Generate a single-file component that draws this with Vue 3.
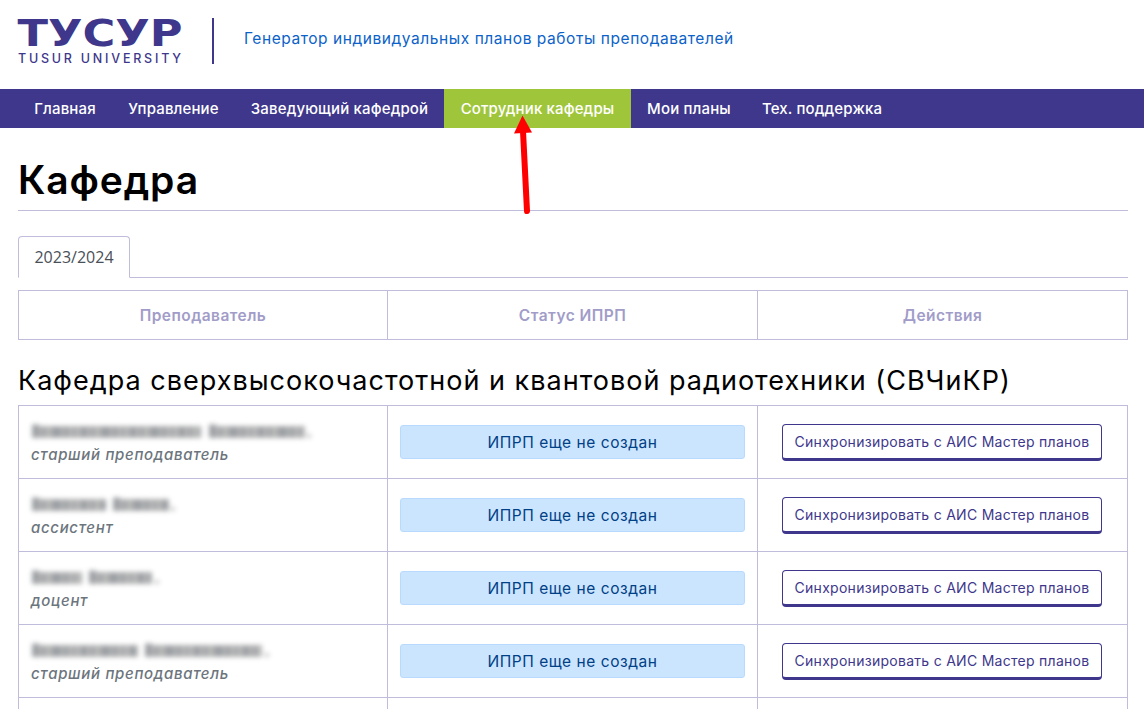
<script setup>
const nav = ['Главная', 'Управление', 'Заведующий кафедрой', 'Сотрудник кафедры', 'Мои планы', 'Тех. поддержка']
const columns = ['Преподаватель', 'Статус ИПРП', 'Действия']
const rows = [
  { words: [[1, 170], [178, 274]], end: 278, role: 'старший преподаватель' },
  { words: [[1, 75], [82, 138]], end: 142, role: 'ассистент' },
  { words: [[1, 51], [58, 121]], end: 126, role: 'доцент' },
  { words: [[1, 107], [114, 231]], end: 236, role: 'старший преподаватель' },
]
</script>

<template>
  <div class="page">
    <header class="header">
      <svg class="logo" width="164" height="46" viewBox="0 0 164 46">
        <text class="logo-main" x="-0.5" y="28" textLength="165" lengthAdjust="spacingAndGlyphs">ТУСУР</text>
        <text class="logo-sub" x="0" y="45" textLength="163" lengthAdjust="spacing">TUSUR UNIVERSITY</text>
      </svg>
      <div class="divider"></div>
      <a class="title">Генератор индивидуальных планов работы преподавателей</a>
    </header>
    <nav class="nav">
      <a v-for="(n, i) in nav" :key="n" class="item" :class="{ active: i === 3 }">{{ n }}</a>
    </nav>
    <svg class="arrow" width="24" height="102" viewBox="0 0 24 102">
      <path d="M11 16L15 96" stroke="#f00" stroke-width="6" stroke-linecap="round" />
      <path d="M10.500 0.500L20 17.500L2 18.500Z" fill="#f00" />
    </svg>
    <main class="main">
      <h1>Кафедра</h1>
      <div class="tabs"><a class="tab">2023/2024</a></div>
      <div class="grid head">
        <div v-for="c in columns" :key="c" class="cell">{{ c }}</div>
      </div>
      <h2>Кафедра сверхвысокочастотной и квантовой радиотехники (СВЧиКР)</h2>
      <div class="list">
        <div v-for="(r, i) in rows" :key="i" class="grid row">
          <div class="cell person">
            <svg class="hidden-name" width="300" height="22" viewBox="0 0 300 22">
              <g v-for="w in r.words" :key="w[0]">
                <path :d="`M${w[0]} 12H${w[1]}`" stroke="#969696" stroke-width="12" />
                <path :d="`M${w[0]} 12H${w[1]}`" stroke="#6c7278" stroke-width="10" stroke-dasharray="6 4 3 7 9 3 4 5 2 6" />
                <path :d="`M${w[0]} 11H${w[0] + 7}`" stroke="#70757a" stroke-width="13" />
              </g>
              <circle :cx="r.end" cy="16" r="2" fill="#999" />
            </svg>
            <div class="role">{{ r.role }}</div>
          </div>
          <div class="cell"><div class="status">ИПРП еще не создан</div></div>
          <div class="cell action"><button>Синхронизировать с АИС Мастер планов</button></div>
        </div>
        <div class="grid row"><div class="cell"></div><div class="cell"></div><div class="cell"></div></div>
      </div>
    </main>
  </div>
</template>

<style>
body { margin: 0; background: #fff; overflow: hidden; }
</style>

<style scoped>
* { box-sizing: border-box; }
.page { position: relative; width: 1144px; height: 709px; overflow: hidden; font-family: Inter, "Liberation Sans", sans-serif; font-size: 16px; color: #000; }
.header { height: 89px; padding: 18px 18px 0; display: flex; align-items: flex-start; }
.logo { display: block; overflow: visible; fill: #3e378b; }
.logo-main { font: 700 37.5px "DejaVu Sans", sans-serif; }
.logo-sub { font: 500 12.500px Inter, sans-serif; }
.divider { width: 2px; height: 46px; margin-left: 30px; background: #3e378b; }
.title { margin-left: 30px; line-height: 20px; margin-top: 11px; font-size: 15.500px; letter-spacing: 0.56px; color: #0b62c8; white-space: nowrap; }
.nav { height: 39px; padding-left: 18px; display: grid; grid-template-columns: 94px 123px 209px 187px 116px 150px; background: #3e378b; }
.item { color: #fff; font-size: 15px; font-weight: 500; letter-spacing: 0.15px; line-height: 39px; text-align: center; white-space: nowrap; }
.active { background: #9fc63b; }
.arrow { position: absolute; left: 512px; top: 115px; fill: none; }
.main { padding: 0 16px 0 18px; }
h1 { margin: 0; height: 83px; padding-top: 28px; border-bottom: 1px solid #c0bcdc; font-size: 39px; letter-spacing: 0.850px; line-height: 48px; font-weight: 600; }
.tabs { height: 42px; margin-top: 25px; border-bottom: 1px solid #c0bcdc; display: flex; }
.tab { width: 112px; height: 42px; border: 1px solid #c0bcdc; border-bottom-color: #fff; border-radius: 4px 4px 0 0; font: 16px/41px "Open Sans", sans-serif; color: #495057; text-align: center; }
.tabs, .head, .list { width: 1110px; }
.grid { display: grid; grid-template-columns: 368px 370px 370px; }
.head { margin-top: 12px; height: 50px; border: 1px solid #c0bcdc; }
.head .cell { line-height: 49px; text-align: center; color: #a19cc8; font-weight: 600; font-size: 15.500px; letter-spacing: 0.45px; }
.cell + .cell { border-left: 1px solid #c0bcdc; }
h2 { margin: 0; height: 65px; padding-top: 22px; font-size: 27px; letter-spacing: 1.010px; line-height: 38px; font-weight: 400; white-space: nowrap; }
.list { border: 1px solid #c0bcdc; border-bottom: 0; }
.row { height: 73px; }
.row:first-child { height: 72px; }
.row + .row { border-top: 1px solid #c0bcdc; }
.person { padding: 14px 0 0 12px; }
.hidden-name { display: block; filter: blur(2.500px); opacity: 0.68; overflow: visible; }
.role { margin-top: 2px; line-height: 22px; font-size: 15px; letter-spacing: 0.68px; font-style: italic; font-weight: 500; color: #6c757d; }
.status { margin: 19px 12px 0; height: 34px; line-height: 33px; border: 1px solid #b8daff; border-radius: 3px; background: #cce5ff; color: #004085; text-align: center; font-size: 15.500px; letter-spacing: 0.55px; }
button { display: block; width: 320px; height: 37px; margin: 18px 0 0 24px; padding: 0; border: 1px solid #3e378b; border-bottom-width: 3px; border-radius: 4px; background: #fff; color: #3e378b; font: 14px/32px Inter, sans-serif; letter-spacing: 0.28px; white-space: nowrap; }
</style>
